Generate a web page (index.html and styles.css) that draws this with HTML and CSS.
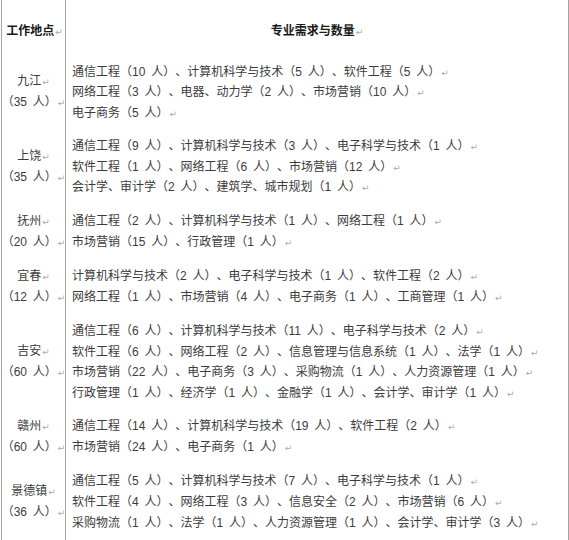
FILE: index.html
```html
<!DOCTYPE html>
<html lang="zh-CN">
<head>
<meta charset="utf-8">
<title>工作地点与专业需求</title>
<link rel="stylesheet" href="styles.css">
</head>
<body>
<div class="grid">
  <div class="cell loc head">工作地点<span class="pm">↵</span></div>
  <div class="cell req head">专业需求与数量<span class="pm">↵</span></div>

  <div class="cell loc"><p>九江<span class="pm">↵</span></p><p>（35 人）<span class="pm">↵</span></p></div>
  <div class="cell req">
    <p>通信工程（10 人）、计算机科学与技术（5 人）、软件工程（5 人）<span class="pm">↵</span></p>
    <p>网络工程（3 人）、电器、动力学（2 人）、市场营销（10 人）<span class="pm">↵</span></p>
    <p>电子商务（5 人）<span class="pm">↵</span></p>
  </div>

  <div class="cell loc"><p>上饶<span class="pm">↵</span></p><p>（35 人）<span class="pm">↵</span></p></div>
  <div class="cell req">
    <p>通信工程（9 人）、计算机科学与技术（3 人）、电子科学与技术（1 人）<span class="pm">↵</span></p>
    <p>软件工程（1 人）、网络工程（6 人）、市场营销（12 人）<span class="pm">↵</span></p>
    <p>会计学、审计学（2 人）、建筑学、城市规划（1 人）<span class="pm">↵</span></p>
  </div>

  <div class="cell loc"><p>抚州<span class="pm">↵</span></p><p>（20 人）<span class="pm">↵</span></p></div>
  <div class="cell req">
    <p>通信工程（2 人）、计算机科学与技术（1 人）、网络工程（1 人）<span class="pm">↵</span></p>
    <p>市场营销（15 人）、行政管理（1 人）<span class="pm">↵</span></p>
  </div>

  <div class="cell loc"><p>宜春<span class="pm">↵</span></p><p>（12 人）<span class="pm">↵</span></p></div>
  <div class="cell req">
    <p>计算机科学与技术（2 人）、电子科学与技术（1 人）、软件工程（2 人）<span class="pm">↵</span></p>
    <p>网络工程（1 人）、市场营销（4 人）、电子商务（1 人）、工商管理（1 人）<span class="pm">↵</span></p>
  </div>

  <div class="cell loc"><p>吉安<span class="pm">↵</span></p><p>（60 人）<span class="pm">↵</span></p></div>
  <div class="cell req">
    <p>通信工程（6 人）、计算机科学与技术（11 人）、电子科学与技术（2 人）<span class="pm">↵</span></p>
    <p>软件工程（6 人）、网络工程（2 人）、信息管理与信息系统（1 人）、法学（1 人）<span class="pm">↵</span></p>
    <p>市场营销（22 人）、电子商务（3 人）、采购物流（1 人）、人力资源管理（1 人）<span class="pm">↵</span></p>
    <p>行政管理（1 人）、经济学（1 人）、金融学（1 人）、会计学、审计学（1 人）<span class="pm">↵</span></p>
  </div>

  <div class="cell loc"><p>赣州<span class="pm">↵</span></p><p>（60 人）<span class="pm">↵</span></p></div>
  <div class="cell req">
    <p>通信工程（14 人）、计算机科学与技术（19 人）、软件工程（2 人）<span class="pm">↵</span></p>
    <p>市场营销（24 人）、电子商务（1 人）<span class="pm">↵</span></p>
  </div>

  <div class="cell loc"><p>景德镇<span class="pm">↵</span></p><p>（36 人）<span class="pm">↵</span></p></div>
  <div class="cell req">
    <p>通信工程（5 人）、计算机科学与技术（7 人）、电子科学与技术（1 人）<span class="pm">↵</span></p>
    <p>软件工程（4 人）、网络工程（3 人）、信息安全（2 人）、市场营销（6 人）<span class="pm">↵</span></p>
    <p>采购物流（1 人）、法学（1 人）、人力资源管理（1 人）、会计学、审计学（3 人）<span class="pm">↵</span></p>
  </div>
</div>
</body>
</html>
```

FILE: styles.css
```css
html, body {
  margin: 0;
  padding: 0;
  background: #ffffff;
}

body {
  font-family: "Liberation Sans", "Noto Sans CJK SC", sans-serif;
  font-size: 12px;
  color: #3c3c3c;
  word-spacing: 2.5px;
  text-spacing-trim: space-all;
}

.grid {
  display: grid;
  grid-template-columns: 64px 1fr;
  width: 568px;
  margin-left: 1px;
  box-sizing: border-box;
  border-left: 1px solid #a3a3a3;
  border-right: 1px solid #a3a3a3;
  border-bottom: 1px solid #a3a3a3;
}

.cell p {
  margin: 0;
  white-space: nowrap;
  height: 20.6px;
}

.loc {
  box-sizing: border-box;
  border-right: 1px solid #a3a3a3;
  display: flex;
  flex-direction: column;
  justify-content: center;
  align-items: center;
  line-height: 21px;
  padding: 6.5px 0;
  white-space: nowrap;
}

.loc p {
  height: 21px;
}

.req {
  padding: 6.5px 0 6.5px 6px;
  line-height: 20.6px;
}

.head {
  display: block;
  font-weight: bold;
  color: #1a1a1a;
  padding: 21px 0 13.4px;
  line-height: 20.6px;
  height: 55px;
  box-sizing: border-box;
  text-align: center;
}

.loc.head {
  text-align: center;
  padding-left: 2px;
}

.pm {
  font-family: "DejaVu Sans", sans-serif;
  font-weight: normal;
  font-size: 9px;
  line-height: 0;
  color: #ababab;
  margin-left: 1px;
}
```
